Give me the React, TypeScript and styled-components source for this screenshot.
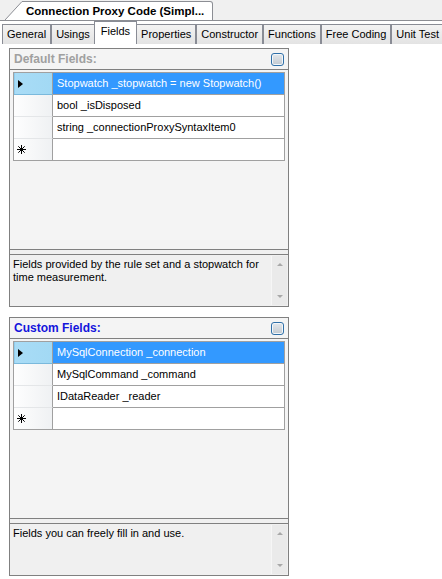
import React from 'react'
import styled, { createGlobalStyle } from 'styled-components'

const GlobalStyle = createGlobalStyle`
    * {
        box-sizing: border-box;
    }
    body {
        margin: 0;
        background: #fff;
        font-family: 'Liberation Sans', Arial, sans-serif;
    }
`

type Field = { text: string; selected?: boolean }

const tabs = ['General', 'Usings', 'Fields', 'Properties', 'Constructor', 'Functions', 'Free Coding', 'Unit Test']

const defaultFields: Field[] = [
    { text: 'Stopwatch _stopwatch = new Stopwatch()', selected: true },
    { text: 'bool _isDisposed' },
    { text: 'string _connectionProxySyntaxItem0' },
]

const customFields: Field[] = [
    { text: 'MySqlConnection _connection', selected: true },
    { text: 'MySqlCommand _command' },
    { text: 'IDataReader _reader' },
]

const Asterisk = () => (
    <svg width="9" height="9" viewBox="0 0 9 9">
        <g stroke="#000" strokeWidth="1">
            <line x1="4.5" y1="0" x2="4.5" y2="9" />
            <line x1="0" y1="4.5" x2="9" y2="4.5" />
            <line x1="1.3" y1="1.3" x2="7.7" y2="7.7" />
            <line x1="7.7" y1="1.3" x2="1.3" y2="7.7" />
        </g>
    </svg>
)

const FieldPanel = ({ title, active, fields, description }: { title: string; active?: boolean; fields: Field[]; description: string }) => (
    <Panel>
        <PanelHeader>
            <PanelTitle $active={active}>{title}</PanelTitle>
            <ToggleBox />
        </PanelHeader>
        <GridArea>
            <Grid>
                {fields.map((f, i) => (
                    <Row key={i}>
                        <RowHead $selected={f.selected}>{f.selected && <Arrow />}</RowHead>
                        <Cell $selected={f.selected}>{f.text}</Cell>
                    </Row>
                ))}
                <Row>
                    <RowHead>
                        <Asterisk />
                    </RowHead>
                    <Cell />
                </Row>
            </Grid>
        </GridArea>
        <Splitter />
        <Description>
            <DescText>{description}</DescText>
            <ScrollBar>
                <ScrollArrow $up />
                <ScrollArrow />
            </ScrollBar>
        </Description>
    </Panel>
)

const App = () => {
    return (
        <Window>
            <GlobalStyle />
            <DocStrip>
                <svg width="17" height="19" viewBox="0 0 17 19" style={{ display: 'block' }}>
                    <polygon points="0,19 17,0.5 17,19" fill="#fff" />
                    <line x1="0" y1="19" x2="17" y2="0.5" stroke="#8c8e94" strokeWidth="1" />
                </svg>
                <DocTab>Connection Proxy Code (Simpl...</DocTab>
            </DocStrip>
            <TabRow>
                {tabs.map((t) => (
                    <Tab key={t} $active={t === 'Fields'}>
                        {t}
                    </Tab>
                ))}
            </TabRow>
            <Content>
                <FieldPanel
                    title="Default Fields:"
                    fields={defaultFields}
                    description="Fields provided by the rule set and a stopwatch for time measurement."
                />
                <FieldPanel
                    title="Custom Fields:"
                    active
                    fields={customFields}
                    description="Fields you can freely fill in and use."
                />
            </Content>
        </Window>
    )
}

const Window = styled.div`
    width: 442px;
    height: 579px;
    background: #fff;
    display: flex;
    flex-direction: column;
    overflow: hidden;
    font-size: 11px;
    color: #000;
`

const DocStrip = styled.div`
    height: 21px;
    display: flex;
    align-items: flex-end;
    padding-left: 5px;
    background: #f0f0f0;
    border-bottom: 1px solid #8c8e94;
`

const DocTab = styled.div`
    height: 20px;
    margin-bottom: -1px;
    background: #fff;
    border-top: 1px solid #8c8e94;
    border-right: 1px solid #8c8e94;
    border-bottom: 1px solid #8c8e94;
    border-top-right-radius: 3px;
    padding: 0 8px 0 4px;
    font-weight: 700;
    font-size: 11.5px;
    line-height: 18px;
`

const TabRow = styled.div`
    height: 23px;
    display: flex;
    align-items: flex-end;
    padding-left: 2px;
`

const Tab = styled.div<{ $active?: boolean }>`
    height: ${(p) => (p.$active ? '23px' : '20px')};
    padding: ${(p) => (p.$active ? '0 6px' : '0 4px')};
    margin: ${(p) => (p.$active ? '0 -1px' : '0')};
    position: relative;
    z-index: ${(p) => (p.$active ? 1 : 0)};
    border: 1px solid #898c95;
    border-bottom: none;
    background: ${(p) => (p.$active ? '#fff' : 'linear-gradient(#f3f3f3, #e3e3e3)')};
    line-height: 18px;
    white-space: nowrap;
`

const Content = styled.div`
    display: flex;
    flex-direction: column;
    gap: 10px;
    padding: 4px 0 0 9px;
`

const Panel = styled.div`
    width: 280px;
    height: 259px;
    border: 1px solid #808080;
    background: #f4f4f4;
    display: flex;
    flex-direction: column;
`

const PanelHeader = styled.div`
    height: 21px;
    flex-shrink: 0;
    display: flex;
    align-items: center;
    justify-content: space-between;
    padding: 0 4px;
    border-bottom: 1px solid #808080;
`

const PanelTitle = styled.span<{ $active?: boolean }>`
    font-weight: 700;
    font-size: 12px;
    color: ${(p) => (p.$active ? '#1414dc' : '#a0a0a0')};
`

const ToggleBox = styled.div`
    width: 13px;
    height: 13px;
    border: 1px solid #3070a8;
    border-radius: 3px;
    background: linear-gradient(#e4e8ec, #c2c9d0);
    box-shadow: inset 0 0 0 1px #f2f6fa;
`

const GridArea = styled.div`
    flex: 1;
    padding: 2px 3px 0 3px;
    border-bottom: 1px solid #808080;
`

const Grid = styled.div`
    width: 272px;
    border: 1px solid #a0a0a0;
    background: #fff;
`

const Row = styled.div`
    display: grid;
    grid-template-columns: 39px 1fr;
    height: 22px;
    &:last-child {
        height: 21px;
    }
    &:last-child > div {
        border-bottom: none;
    }
`

const RowHead = styled.div<{ $selected?: boolean }>`
    display: flex;
    align-items: center;
    padding-left: 3px;
    border-right: 1px solid #a0a0a0;
    border-bottom: 1px solid ${(p) => (p.$selected ? '#7ab9dc' : '#e4e6e8')};
    background: ${(p) =>
        p.$selected ? 'linear-gradient(to right, #8fcdee 1px, #a9dcf6 1px, #a2d9f4)' : 'linear-gradient(to right, #fefefe, #eff1f3)'};
`

const Arrow = styled.span`
    width: 0;
    height: 0;
    margin-left: 1px;
    border-top: 4.5px solid transparent;
    border-bottom: 4.5px solid transparent;
    border-left: 5px solid #000;
`

const Cell = styled.div<{ $selected?: boolean }>`
    padding-left: 4px;
    line-height: 21px;
    white-space: nowrap;
    overflow: hidden;
    border-bottom: 1px solid #a0a0a0;
    background: ${(p) => (p.$selected ? '#3399ff' : '#fff')};
    color: ${(p) => (p.$selected ? '#fff' : '#000')};
`

const Splitter = styled.div`
    height: 5px;
    flex-shrink: 0;
    background: #f0f0f0;
    border-bottom: 1px solid #808080;
`

const Description = styled.div`
    height: 51px;
    flex-shrink: 0;
    display: flex;
    background: #f0f0f0;
    padding: 1px 1px 1px 0;
`

const DescText = styled.div`
    flex: 1;
    padding: 2px 3px 0 3px;
    line-height: 13px;
`

const ScrollBar = styled.div`
    width: 16px;
    display: flex;
    flex-direction: column;
    justify-content: space-between;
    align-items: center;
    padding: 7px 0 7px;
    background: #eaeaea;
    border-left: 1px solid #f6f6f6;
`

const ScrollArrow = styled.span<{ $up?: boolean }>`
    width: 0;
    height: 0;
    border-left: 3px solid transparent;
    border-right: 3px solid transparent;
    ${(p) => (p.$up ? 'border-bottom: 3px solid #a8a8a8;' : 'border-top: 3px solid #a8a8a8;')}
`

export default App
